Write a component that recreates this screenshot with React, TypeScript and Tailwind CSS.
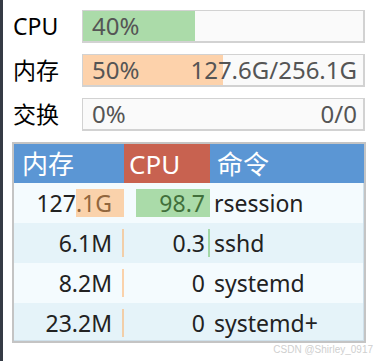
import React from 'react';

const font = { fontFamily: '"Noto Sans", "Noto Sans CJK SC", sans-serif' };

type Meter = { label: string; pct: number; left: string; right?: string; fill: string };

const meters: Meter[] = [
  { label: 'CPU', pct: 40, left: '40%', fill: 'bg-[#abdba9]' },
  { label: '内存', pct: 50, left: '50%', right: '127.6G/256.1G', fill: 'bg-[#fdd2ab]' },
  { label: '交换', pct: 0, left: '0%', right: '0/0', fill: 'bg-[#fdd2ab]' },
];

type Proc = { mem: string; memBar: number; cpu: string; cpuBar: number; cmd: string };

const procs: Proc[] = [
  { mem: '127.1G', memBar: 48, cpu: '98.7', cpuBar: 74, cmd: 'rsession' },
  { mem: '6.1M', memBar: 2, cpu: '0.3', cpuBar: 2, cmd: 'sshd' },
  { mem: '8.2M', memBar: 2, cpu: '0', cpuBar: 0, cmd: 'systemd' },
  { mem: '23.2M', memBar: 2, cpu: '0', cpuBar: 0, cmd: 'systemd+' },
];

function MeterRow({ m }: { m: Meter }) {
  return (
    <div className="flex items-center h-[33px]">
      <div className="w-[69px] text-[23px] text-black leading-none">{m.label}</div>
      <div className="relative h-[33px] w-[283px] bg-[#fafafa] border-t border-l border-b-2 border-r-2 border-[#d2d2d2]">
        <div className={`absolute inset-y-0 left-0 ${m.fill}`} style={{ width: `${m.pct}%` }} />
        <div className="relative flex h-full items-center justify-between pl-[9px] pr-[6px] text-[24px] leading-none text-[#555]">
          <span>{m.left}</span>
          {m.right && <span>{m.right}</span>}
        </div>
      </div>
    </div>
  );
}

export default function App() {
  return (
    <div className="relative flex w-[377px] h-[361px] bg-white overflow-hidden" style={font}>
      <div className="w-[3px] h-full bg-[#353b45]" />
      <div className="flex flex-col gap-[11px] pt-[10px] pl-[10px]">
        {meters.map((m) => (
          <MeterRow key={m.label} m={m} />
        ))}

        <div className="ml-[-1px] w-[354px] border-2 border-[#c4c4c4]">
          <div className="grid grid-cols-[110px_86px_1fr] h-[39px] text-[26px] leading-none text-white">
            <div className="flex items-center pl-[8px] bg-[#5b96d4]">内存</div>
            <div className="flex items-center pl-[5px] bg-[#c86250]">CPU</div>
            <div className="flex items-center pl-[7px] bg-[#5b96d4]">命令</div>
          </div>
          <div className="h-[158px] overflow-hidden border-r border-b border-[#cfe0ea]">
            {procs.map((p, i) => (
              <div
                key={p.cmd}
                className={`grid grid-cols-[110px_86px_1fr] h-[40px] text-[23px] leading-none text-[#222] ${
                  i % 2 === 0 ? 'bg-[#f4fbfe]' : 'bg-[#e5f3f9]'
                }`}
              >
                <div className="relative flex items-center justify-end pr-[12px]">
                  <span>{p.mem}</span>
                  <div className="absolute right-0 top-[6px] h-[28px] bg-[#ffa958]/50" style={{ width: p.memBar }} />
                </div>
                <div className="relative flex items-center justify-end pr-[5px]">
                  <span>{p.cpu}</span>
                  <div className="absolute right-0 top-[6px] h-[28px] bg-[#5fbb54]/50" style={{ width: p.cpuBar }} />
                </div>
                <div className="flex items-center pl-[4px]">{p.cmd}</div>
              </div>
            ))}
          </div>
        </div>
      </div>
      <div className="absolute right-[4px] bottom-[6px] text-[10px] leading-none text-[#cfcfcf]" style={{ fontFamily: '"Liberation Sans", sans-serif' }}>
        CSDN @Shirley_0917
      </div>
    </div>
  );
}
